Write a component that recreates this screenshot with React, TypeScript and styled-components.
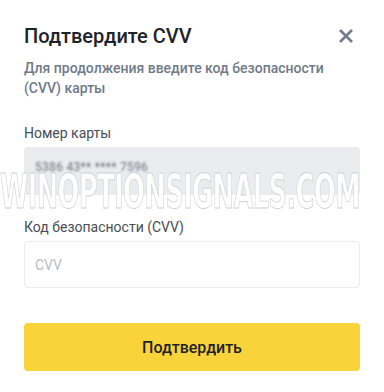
import styled, { createGlobalStyle } from 'styled-components';

const GlobalStyle = createGlobalStyle`
  html, body {
    margin: 0;
    padding: 0;
    background: #ffffff;
  }
  body {
    font-family: Roboto, Inter, "Noto Sans", sans-serif;
    color: #1e2329;
  }
`;

const Dialog = styled.div`
  position: relative;
  width: 384px;
  height: 392px;
  box-sizing: border-box;
  padding: 22px 24px 0;
  background: #fff;
  overflow: hidden;
`;

const Header = styled.div`
  display: flex;
  align-items: center;
  justify-content: space-between;
  height: 28px;
`;

const Title = styled.h2`
  margin: 0;
  font-size: 20px;
  line-height: 28px;
  font-weight: 500;
  color: #1e2329;
`;

const CloseButton = styled.button`
  display: flex;
  align-items: center;
  justify-content: center;
  width: 24px;
  height: 24px;
  margin-right: 2px;
  padding: 0;
  border: none;
  background: none;
  cursor: pointer;
`;

const Subtitle = styled.p`
  margin: 8px 0 0;
  font-size: 14px;
  line-height: 20px;
  font-weight: 500;
  color: #707a8a;
`;

const Field = styled.div<{ $top: number }>`
  display: flex;
  flex-direction: column;
  gap: 4px;
  margin-top: ${p => p.$top}px;
`;

const Label = styled.label`
  font-size: 14px;
  line-height: 20px;
  color: #474d57;
`;

const Input = styled.div<{ $disabled?: boolean }>`
  display: flex;
  align-items: center;
  box-sizing: border-box;
  height: ${p => (p.$disabled ? 48 : 47)}px;
  padding: 0 10px;
  border-radius: 4px;
  border: 1px solid #eaecef;
  background: ${p => (p.$disabled ? '#eaecef' : '#fff')};
  font-size: 14px;
`;

const Masked = styled.span`
  font-size: 12px;
  color: #6a717c;
  letter-spacing: 0.3px;
  filter: blur(0.8px);
  margin-top: -8px;
`;

const Placeholder = styled.span`
  color: #b7bdc6;
  font-size: 14px;
`;

const SubmitButton = styled.button`
  width: 100%;
  height: 48px;
  margin-top: 35px;
  border: none;
  border-radius: 4px;
  background: #f8d33a;
  color: #1e2329;
  font-family: inherit;
  font-size: 16px;
  font-weight: 500;
  cursor: pointer;
`;

const Watermark = styled.div`
  position: absolute;
  left: 0;
  top: 167px;
  width: 384px;
  font-family: "DejaVu Sans Condensed", "DejaVu Sans", sans-serif;
  font-weight: bold;
  font-size: 48px;
  line-height: 48px;
  letter-spacing: -1px;
  color: rgba(255, 255, 255, 0.9);
  -webkit-text-stroke: 0.8px #cfcfcf;
  transform: scaleX(0.595);
  transform-origin: left top;
  white-space: nowrap;
  pointer-events: none;
`;

export default function App() {
  return (
    <>
      <GlobalStyle />
      <Dialog>
        <Header>
          <Title>Подтвердите CVV</Title>
          <CloseButton aria-label="close">
            <svg width="16" height="16" viewBox="0 0 16 16">
              <path d="M2 2 L14 14 M14 2 L2 14" stroke="#707a8a" strokeWidth="2.6" strokeLinecap="butt" />
            </svg>
          </CloseButton>
        </Header>
        <Subtitle>Для продолжения введите код безопасности (CVV) карты</Subtitle>
        <Field $top={25}>
          <Label>Номер карты</Label>
          <Input $disabled>
            <Masked>5386 43** **** 7596</Masked>
          </Input>
        </Field>
        <Field $top={22}>
          <Label>Код безопасности (CVV)</Label>
          <Input>
            <Placeholder>CVV</Placeholder>
          </Input>
        </Field>
        <SubmitButton>Подтвердить</SubmitButton>
        <Watermark>WINOPTIONSIGNALS.COM</Watermark>
      </Dialog>
    </>
  );
}
